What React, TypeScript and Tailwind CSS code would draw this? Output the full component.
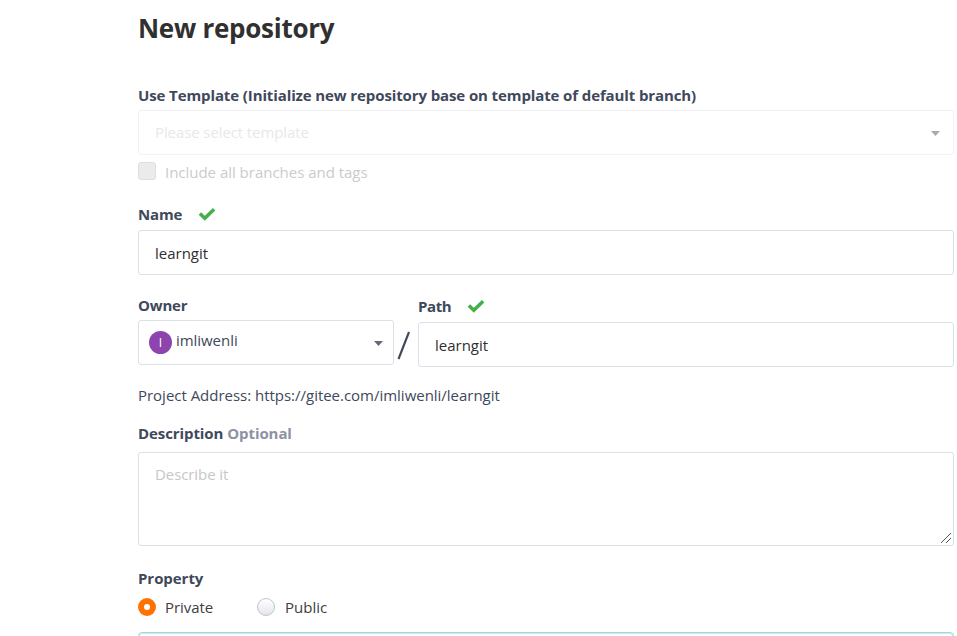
import type { ReactNode } from "react";

function Label({ children, className = "" }: { children: ReactNode; className?: string }) {
  return (
    <div className={`flex h-6 items-center whitespace-nowrap text-[15px] leading-6 font-bold text-[#40485b] ${className}`}>
      {children}
    </div>
  );
}

function Check() {
  return (
    <svg className="h-[14px] w-[18px] shrink-0" viewBox="0 0 18 14" fill="none">
      <path d="M1.9 6.5 6.8 11.2 16.1 2.2" stroke="#45b04b" strokeWidth="3.5" />
    </svg>
  );
}

function Caret({ className }: { className: string }) {
  return (
    <svg className={`h-[5px] w-[9px] shrink-0 ${className}`} viewBox="0 0 9 5" fill="currentColor">
      <path d="M0 0H9L4.5 5Z" />
    </svg>
  );
}

const field = "flex h-[45px] items-center rounded-[3px] border bg-white text-[15px] leading-6 whitespace-nowrap";

export default function App() {
  return (
    <main className="h-[636px] overflow-hidden bg-white pl-[138px] pr-[3px] pt-[10px] font-['Open_Sans','Noto_Sans',sans-serif] text-[15px] leading-6 text-[#40485b]">
      <h1 className="h-9 whitespace-nowrap text-[26px] leading-9 font-bold tracking-[-0.27px] text-[#303030]">New repository</h1>

      <Label className="mt-[37px] tracking-[-0.11px]">Use Template (Initialize new repository base on template of default branch)</Label>
      <div className={`${field} mt-[3px] justify-between border-[#f2f2f2] pl-4 pr-[13px] text-[#e8e8e8]`}>
        <span className="mb-[2px] tracking-[-0.1px]">Please select template</span>
        <Caret className="mt-px text-[#aaaaaa]" />
      </div>
      <div className="mt-[5px] flex h-6 whitespace-nowrap text-[#cbcbcb]">
        <span className="mt-[2px] h-[18px] w-[18px] shrink-0 rounded-[3px] border border-[#dedede] bg-[#ebebeb]" />
        <span className="ml-[9px] tracking-[-0.02px]">Include all branches and tags</span>
      </div>

      <Label className="mt-[18px] gap-4 tracking-[-0.15px]">Name<Check /></Label>
      <div className={`${field} mt-1 border-[#dce0e8] pl-4 text-[#303030]`}>
        <span>learngit</span>
      </div>

      <div className="mt-[18px] flex h-[74px]">
        <div className="w-[256px]">
          <Label className="tracking-[-0.2px]">Owner</Label>
          <div className={`${field} mt-[3px] border-[#dce0e8] px-[10px]`}>
            <span className="flex h-[23px] w-[23px] items-center justify-center rounded-full bg-[#8e44ad] text-[12px] text-white">I</span>
            <span className="mb-[5px] ml-[4px] flex-1 tracking-[-0.05px]">imliwenli</span>
            <Caret className="mt-px text-[#646a78]" />
          </div>
        </div>
        <div className="flex w-6 pl-[3px] pt-[38px]">
          <svg className="h-[29px] w-[14px]" viewBox="0 0 14 29" stroke="#40485b" strokeWidth="2.1">
            <path d="M1.5 28 12 1" />
          </svg>
        </div>
        <div className="flex-1 pt-px">
          <Label className="gap-4 tracking-[-0.4px]">Path<Check /></Label>
          <div className={`${field} mt-1 border-[#dce0e8] pl-4 text-[#303030]`}>
            <span>learngit</span>
          </div>
        </div>
      </div>

      <div className="mt-4 h-6 whitespace-nowrap tracking-[-0.02px]">Project Address: https://gitee.com/imliwenli/learngit</div>

      <Label className="mt-[14px] tracking-[-0.09px]">
        <span>Description</span>
        <span className="ml-1 text-[#8c92a4]">Optional</span>
      </Label>
      <div className="mt-[7px] flex h-[94px] justify-between rounded-[3px] border border-[#dce0e8] pl-4 pt-[9px] text-[#c7c7c7]">
        <span className="tracking-[-0.08px]">Describe it</span>
        <svg className="mr-[1px] mb-[1px] h-[12px] w-[12px] self-end" viewBox="0 0 12 12" stroke="#55555c" strokeWidth="1">
          <path d="M1 11 11 1M6 11 11 6" />
        </svg>
      </div>

      <Label className="mt-5 tracking-[-0.05px]">Property</Label>
      <div className="mt-[5px] flex h-6 whitespace-nowrap text-[#404040]">
        <span className="mt-[3px] flex h-[18px] w-[18px] shrink-0 items-center justify-center rounded-full bg-[#fe7300]">
          <span className="h-[6px] w-[6px] rounded-full bg-white" />
        </span>
        <span className="ml-[9px] w-[92px] tracking-[-0.05px]">Private</span>
        <span className="mt-[3px] h-[18px] w-[18px] shrink-0 rounded-full border border-[#c2c4c8] bg-linear-to-b from-white to-[#e4e6ec]" />
        <span className="ml-[10px]">Public</span>
      </div>
      <div className="mt-[13px] h-10 rounded-[4px] border border-[#a9d5de] bg-[#f8ffff] shadow-[inset_0_0_0_1px_#cfe8ed]" />
    </main>
  );
}
